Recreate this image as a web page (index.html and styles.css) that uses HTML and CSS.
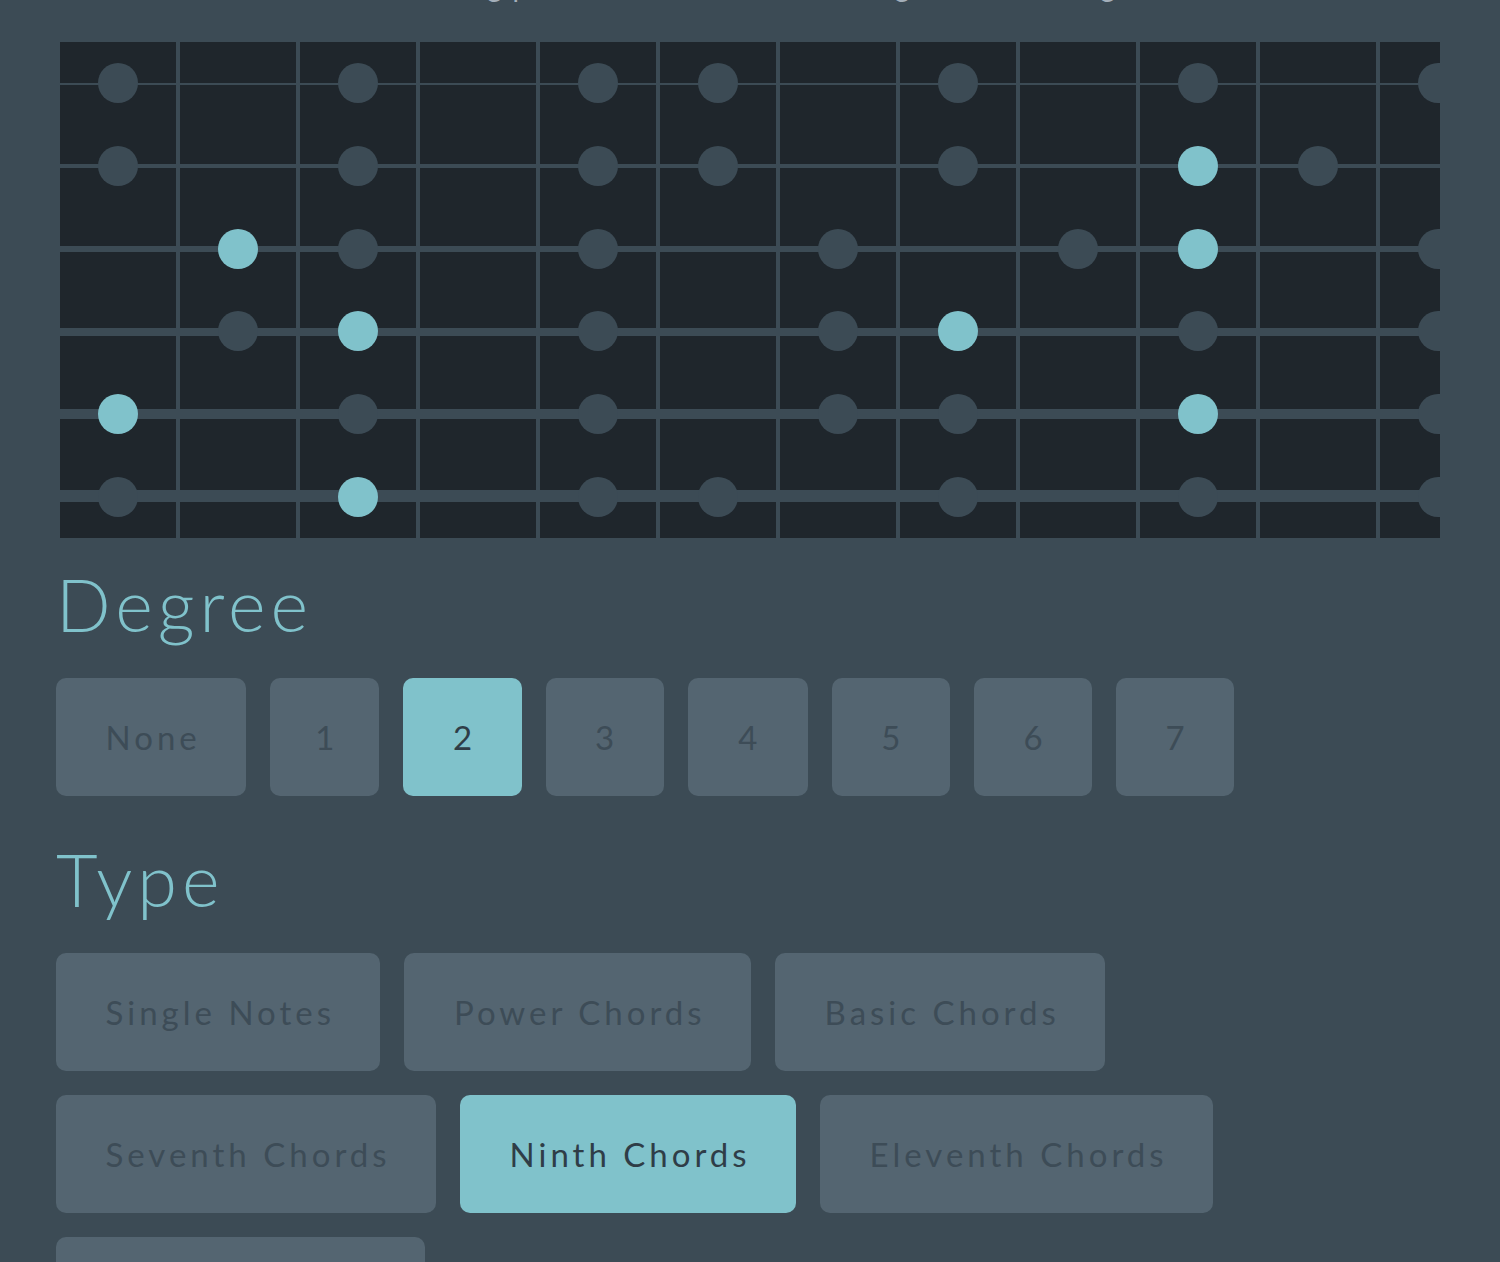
FILE: index.html
```html
<!DOCTYPE html>
<html lang="en">
<head>
<meta charset="utf-8">
<title>Chord Trainer</title>
<link rel="stylesheet" href="styles.css">
</head>
<body>
<main class="page">
  <p class="intro">Notes are marked using patterns which stretch along the selected grid.</p>

  <div class="board">
    <div class="string s1">
      <span class="cell"><i class="dot"></i></span><span class="cell"></span><span class="cell"><i class="dot"></i></span><span class="cell"></span><span class="cell"><i class="dot"></i></span><span class="cell"><i class="dot"></i></span><span class="cell"></span><span class="cell"><i class="dot"></i></span><span class="cell"></span><span class="cell"><i class="dot"></i></span><span class="cell"></span><span class="cell"><i class="dot"></i></span>
    </div>
    <div class="string s2">
      <span class="cell"><i class="dot"></i></span><span class="cell"></span><span class="cell"><i class="dot"></i></span><span class="cell"></span><span class="cell"><i class="dot"></i></span><span class="cell"><i class="dot"></i></span><span class="cell"></span><span class="cell"><i class="dot"></i></span><span class="cell"></span><span class="cell"><i class="dot on"></i></span><span class="cell"><i class="dot"></i></span><span class="cell"></span>
    </div>
    <div class="string s3">
      <span class="cell"></span><span class="cell"><i class="dot on"></i></span><span class="cell"><i class="dot"></i></span><span class="cell"></span><span class="cell"><i class="dot"></i></span><span class="cell"></span><span class="cell"><i class="dot"></i></span><span class="cell"></span><span class="cell"><i class="dot"></i></span><span class="cell"><i class="dot on"></i></span><span class="cell"></span><span class="cell"><i class="dot"></i></span>
    </div>
    <div class="string s4">
      <span class="cell"></span><span class="cell"><i class="dot"></i></span><span class="cell"><i class="dot on"></i></span><span class="cell"></span><span class="cell"><i class="dot"></i></span><span class="cell"></span><span class="cell"><i class="dot"></i></span><span class="cell"><i class="dot on"></i></span><span class="cell"></span><span class="cell"><i class="dot"></i></span><span class="cell"></span><span class="cell"><i class="dot"></i></span>
    </div>
    <div class="string s5">
      <span class="cell"><i class="dot on"></i></span><span class="cell"></span><span class="cell"><i class="dot"></i></span><span class="cell"></span><span class="cell"><i class="dot"></i></span><span class="cell"></span><span class="cell"><i class="dot"></i></span><span class="cell"><i class="dot"></i></span><span class="cell"></span><span class="cell"><i class="dot on"></i></span><span class="cell"></span><span class="cell"><i class="dot"></i></span>
    </div>
    <div class="string s6">
      <span class="cell"><i class="dot"></i></span><span class="cell"></span><span class="cell"><i class="dot on"></i></span><span class="cell"></span><span class="cell"><i class="dot"></i></span><span class="cell"><i class="dot"></i></span><span class="cell"></span><span class="cell"><i class="dot"></i></span><span class="cell"></span><span class="cell"><i class="dot"></i></span><span class="cell"></span><span class="cell"><i class="dot"></i></span>
    </div>
  </div>

  <section class="group">
    <h2 class="title">Degree</h2>
    <div class="options">
      <button class="opt">None</button>
      <button class="opt opt-narrow">1</button>
      <button class="opt active">2</button>
      <button class="opt">3</button>
      <button class="opt opt-wide">4</button>
      <button class="opt">5</button>
      <button class="opt">6</button>
      <button class="opt">7</button>
    </div>
  </section>

  <section class="group">
    <h2 class="title">Type</h2>
    <div class="options">
      <button class="opt">Single Notes</button>
      <button class="opt">Power Chords</button>
      <button class="opt">Basic Chords</button>
      <button class="opt">Seventh Chords</button>
      <button class="opt active">Ninth Chords</button>
      <button class="opt">Eleventh Chords</button>
      <button class="opt">Altered Chords</button>
    </div>
  </section>
</main>
</body>
</html>
```

FILE: styles.css
```css
html, body {
  margin: 0;
  padding: 0;
  background: #3c4b55;
}

body {
  font-family: Lato, "Open Sans", sans-serif;
  overflow: hidden;
}

.page {
  padding: 0 60px;
}

.intro {
  margin: -31px 0 0;
  padding-left: 115px;
  font-size: 28px;
  line-height: 34px;
  letter-spacing: 1.8px;
  color: #a4afba;
  white-space: nowrap;
}

.board {
  margin-top: 39px;
  width: 1380px;
  height: 496px;
  overflow: hidden;
  display: grid;
  grid-template-rows: repeat(6, 1fr);
  background: repeating-linear-gradient(to right, #1f262c 0 116px, #3c4b55 116px 120px);
}

.string {
  --w: 2px;
  display: grid;
  grid-template-columns: repeat(12, 120px);
  align-items: center;
  background: linear-gradient(to bottom,
    transparent calc(50% - var(--w) / 2),
    #3c4b55 calc(50% - var(--w) / 2),
    #3c4b55 calc(50% + var(--w) / 2),
    transparent calc(50% + var(--w) / 2));
}

.s1 { --w: 2px; }
.s2 { --w: 4px; }
.s3 { --w: 6px; }
.s4 { --w: 8px; }
.s5 { --w: 10px; }
.s6 { --w: 12px; }

.cell {
  display: flex;
  align-items: center;
  height: 40px;
}

.dot {
  display: block;
  width: 40px;
  height: 40px;
  margin-left: 38px;
  border-radius: 50%;
  background: #3c4b55;
}

.dot.on {
  background: #80c2cb;
}

.group {
  margin-top: 30px;
}

.group + .group {
  margin-top: 47px;
}

.title {
  margin: 0 0 0 -4px;
  font-family: Lato, sans-serif;
  font-weight: 300;
  font-size: 72px;
  line-height: 72px;
  letter-spacing: 5px;
  color: #80c2cb;
}

.options {
  display: flex;
  flex-wrap: wrap;
  gap: 24px;
  margin: 38px 0 0 -4px;
  width: 1200px;
}

.opt {
  height: 118px;
  padding: 0 45.5px 0 49.5px;
  border: 0;
  border-radius: 10px;
  background: #546571;
  color: #3d4c57;
  font-family: Lato, sans-serif;
  font-weight: 400;
  font-size: 33px;
  letter-spacing: 4px;
  cursor: pointer;
}

.opt-narrow {
  padding: 0 41px 0 45px;
}

.opt-wide {
  padding: 0 46.5px 0 50.5px;
}

.opt.active {
  background: #80c2cb;
  color: #2f3d47;
}
```
